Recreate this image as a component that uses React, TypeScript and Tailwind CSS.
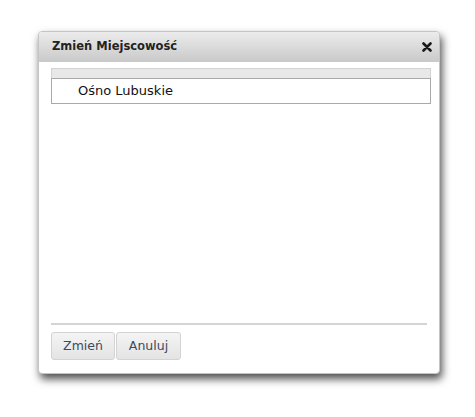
export default function App() {
  return (
    <div className="h-[417px] w-[475px] bg-white pl-[38px] pt-[31px] font-['DejaVu_Sans',Verdana,sans-serif]">
      <div className="flex h-[343px] w-[402px] flex-col overflow-hidden rounded-[4px] border border-[#c4c4c4] bg-white shadow-[2px_5px_8px_rgba(0,0,0,0.7)]">
        {/* nagłówek okna */}
        <div className="flex h-[30px] items-center justify-between bg-gradient-to-b from-[#ececec] to-[#c9c9c9] pl-[13px] pr-[7px]">
          <span className="text-[11.5px] font-bold text-[#222]">Zmień Miejscowość</span>
          <svg width="10" height="10" viewBox="0 0 10 10" className="mb-[1px]">
            <path d="M1.5 1.5 8.5 8.5M8.5 1.5 1.5 8.5" stroke="#1a1a1a" strokeWidth="2.6" strokeLinecap="round" />
          </svg>
        </div>

        <div className="flex flex-1 flex-col px-3 pt-[6px]">
          <div className="w-[380px]">
            <div className="h-[10px] border border-b-0 border-[#d2d2d2] bg-[#e8e8e8]" />
            <div className="flex h-[26px] items-center border border-[#a9a9a9] pl-[26px] text-[13px] text-[#111]">
              Ośno Lubuskie
            </div>
          </div>

          <div className="flex-1" />

          <div className="h-[2px] bg-[#d4d4d4]" />
          <div className="mt-[7px] mb-[13px] flex gap-[1px]">
            <Przycisk label="Zmień" szer="w-[64px]" />
            <Przycisk label="Anuluj" szer="w-[65px]" />
          </div>
        </div>
      </div>
    </div>
  );
}

function Przycisk({ label, szer }: { label: string; szer: string }) {
  return (
    <button
      type="button"
      className={`${szer} h-[28px] rounded-[3px] border border-[#d3d3d3] bg-gradient-to-b from-[#f4f4f4] to-[#e4e4e4] text-[12.5px] text-[#3b4a5c]`}
    >
      {label}
    </button>
  );
}
